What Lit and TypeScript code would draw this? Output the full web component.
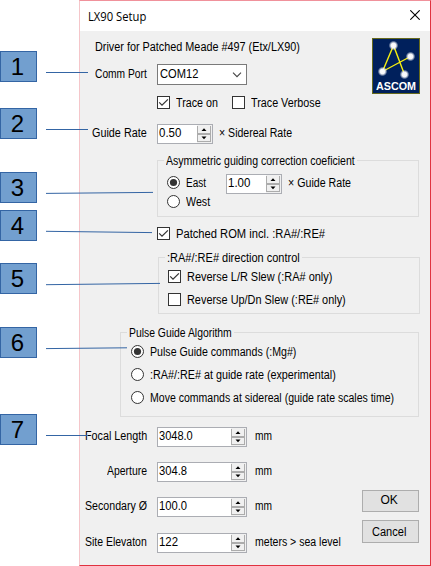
import { LitElement, html, css, svg } from "lit";
import { customElement, property } from "lit/decorators.js";

/** A text run condensed or widened so that it spans a given width. */
@customElement("fit-text")
class FitText extends LitElement {
  @property() text = "";
  @property({ type: Number }) width = 0;
  static styles = css`
    :host { display: block; white-space: pre; flex: none; }
    .run { display: inline-block; transform-origin: 0 50%; vertical-align: top; }
  `;
  render() {
    return html`<span class="run">${this.text}</span>`;
  }
  updated() {
    const run = this.renderRoot.querySelector(".run") as HTMLElement;
    const natural = run.offsetWidth;
    run.style.transform = `scaleX(${this.width / natural})`;
    this.style.width = `${this.width}px`;
  }
}

@customElement("check-box")
class CheckBox extends LitElement {
  @property({ type: Boolean }) checked = false;
  static styles = css`
    :host { display: block; flex: none; width: 13px; height: 13px; }
    svg { display: block; }
  `;
  render() {
    return html`<svg width="13" height="13" viewBox="0 0 13 13">
      <rect x=".5" y=".5" width="12" height="12" fill="#fff" stroke="#333" />
      ${this.checked ? svg`<path d="M2.2 6.4 5 9.2 10.9 3.3" fill="none" stroke="#333" stroke-width="1.2" />` : ""}
    </svg>`;
  }
}

@customElement("radio-dot")
class RadioDot extends LitElement {
  @property({ type: Boolean }) checked = false;
  static styles = css`
    :host { display: block; flex: none; width: 13px; height: 13px; }
    svg { display: block; }
  `;
  render() {
    return html`<svg width="13" height="13" viewBox="0 0 13 13">
      <circle cx="6.5" cy="6.5" r="6" fill="#fff" stroke="#333" />
      ${this.checked ? svg`<circle cx="6.5" cy="6.5" r="3.6" fill="#333" />` : ""}
    </svg>`;
  }
}

@customElement("spin-box")
class SpinBox extends LitElement {
  @property() value = "";
  @property({ type: Number }) span = 0;
  static styles = css`
    :host {
      display: flex; flex: none; box-sizing: border-box; width: 90px; height: 20px;
      border: 1px solid #abadb3; background: #fff; justify-content: space-between;
      align-items: flex-start; padding-left: 1px;
    }
    :host([small]) { width: 56px; }
    svg { display: block; flex: none; }
  `;
  render() {
    return html`<fit-text .text=${this.value} .width=${this.span}></fit-text>
      <svg width="15" height="18" viewBox="0 0 15 18">
        <rect width="15" height="18" fill="#f0f0f0" />
        <rect x=".5" y=".5" width="13" height="8" fill="#f0f0f0" stroke="#acacac" />
        <rect x=".5" y="9.5" width="13" height="7" fill="#f0f0f0" stroke="#acacac" />
        <path d="M0 .5H15" stroke="#f0f0f0" />
        <path d="M4.5 6 7 3.3 9.5 6zM4.5 11.5 7 14.2 9.5 11.5z" fill="#000" />
      </svg>`;
  }
}

const t = (text: string, width: number) =>
  html`<fit-text .text=${text} .width=${width}></fit-text>`;

const optics = [
  { label: "Focal Length", lw: 62, value: "3048.0", vw: 34, unit: "mm", uw: 17 },
  { label: "Aperture", lw: 40, value: "304.8", vw: 28, unit: "mm", uw: 17 },
  { label: "Secondary Ø", lw: 62, value: "100.0", vw: 28, unit: "mm", uw: 17 },
  { label: "Site Elevaton", lw: 62, value: "122", vw: 19, unit: "meters > sea level", uw: 86 },
];

@customElement("app-root")
class AppRoot extends LitElement {
  static styles = css`
    :host {
      display: flex; position: relative; width: 431px; height: 566px; overflow: hidden;
      background: #fff; color: #000; font: 12px/16px "Liberation Sans", Arial, sans-serif;
    }
    .notes { width: 79px; flex: none; }
    .note {
      box-sizing: border-box; width: 37px; height: 31px; border: 1px solid #3465a4;
      background: #729fcf; font: 24px/29px "Liberation Sans", Arial, sans-serif;
      text-align: center; padding-right: 2px;
    }
    .n1 { margin-top: 51px; }
    .n2 { margin-top: 26px; }
    .n3 { margin-top: 33px; }
    .n4 { margin-top: 7px; }
    .n5 { margin-top: 22px; }
    .n6 { margin-top: 33px; }
    .n7 { margin-top: 56px; }
    .leaders { position: absolute; left: 0; top: 0; pointer-events: none; }
    .dialog {
      box-sizing: border-box; width: 352px; height: 566px; background: #f0f0f0;
      border: 1px solid #e0323f; border-left-color: #f5c6ca; border-top-color: #f0919b;
    }
    .titlebar {
      box-sizing: border-box; display: flex; justify-content: space-between; align-items: center;
      height: 30px; background: #fff; padding: 0 10px 0 8px; font: 12px/16px "Open Sans", sans-serif;
    }
    .titlebar fit-text { margin-top: 2px; }
    .titlebar svg { margin-bottom: 2px; }
    .body { height: 534px; }
    .top { display: flex; justify-content: space-between; height: 87px; padding-right: 10px; }
    .logo { margin-top: 7px; flex: none; }
    .logo text { font: bold 11px "Liberation Sans", Arial, sans-serif; }
    .row { display: flex; align-items: center; }
    .label { display: flex; justify-content: flex-end; width: 67px; margin-right: 10px; flex: none; }
    .driver { padding: 0 0 2px 15px; height: 31px; }
    .comm { height: 21px; }
    .combo {
      box-sizing: border-box; display: flex; align-items: center; justify-content: space-between;
      width: 90px; height: 21px; background: #fff; border: 1px solid #7a7a7a; padding: 0 4px 0 2px;
    }
    .combo fit-text, .comm .label { padding-bottom: 2px; }
    .trace { padding: 11px 0 0 77px; height: 13px; gap: 6px; }
    .trace check-box + fit-text { margin-right: 8px; }
    .rate { height: 20px; margin-top: 6px; }
    .rate .label, .field .label, .unit, .times { padding-bottom: 2px; }
    .times { margin-left: 6px; }
    .group { box-sizing: border-box; position: relative; border: 1px solid #dcdcdc; }
    .legend {
      position: absolute; top: -8px; left: 6px; background: #f0f0f0; padding: 0 2px; display: flex;
    }
    .asym { margin: 16px 0 0 77px; width: 262px; height: 57px; padding-left: 9px; }
    .asym radio-dot, .pulse radio-dot { margin-right: 6px; }
    .east { margin-top: 13px; height: 20px; }
    .east > radio-dot, .east > fit-text { padding-bottom: 3px; }
    .east spin-box { margin-left: 20px; }
    .west { height: 13px; margin-top: 1px; }
    .patched { height: 13px; margin: 10px 0 0 77px; gap: 6px; }
    .direction { margin: 17px 0 0 78px; width: 262px; height: 57px; padding: 12px 0 0 9px; }
    .direction .row { height: 13px; margin-bottom: 10px; gap: 6px; }
    .pulse { margin: 18px 0 0 40px; width: 299px; height: 85px; padding: 12px 0 0 10px; }
    .pulse .row { height: 13px; margin-bottom: 10px; }
    .foot { display: flex; justify-content: space-between; padding-right: 11px; margin-top: 10px; }
    .field { height: 20px; margin-bottom: 15px; }
    .field:nth-child(3) { margin-bottom: 16px; }
    .unit { margin-left: 8px; }
    .buttons { display: flex; flex-direction: column; gap: 8px; padding-top: 63px; }
    .button {
      box-sizing: border-box; width: 57px; height: 22px; border: 1px solid #adadad;
      background: #e1e1e1; display: flex; align-items: center; justify-content: center;
    }
    .button fit-text { margin-bottom: 2px; margin-right: 3px; }
    .button.cancel { height: 23px; }
    .button.cancel fit-text { margin: 0; margin-right: 3px; }
  `;

  render() {
    return html`
      <div class="notes">
        ${[1, 2, 3, 4, 5, 6, 7].map((n) => html`<div class="note n${n}">${n}</div>`)}
      </div>
      <div class="dialog">
        <div class="titlebar">
          ${t("LX90 Setup", 58)}
          <svg width="10" height="10" viewBox="0 0 10 10">
            <path d="M.3 .3 9.7 9.7M9.7 .3 .3 9.7" stroke="#000" stroke-width="1.1" />
          </svg>
        </div>
        <div class="body">
          <div class="top">
            <div>
              <div class="row driver">${t("Driver for Patched Meade #497 (Etx/LX90)", 205)}</div>
              <div class="row comm">
                <div class="label">${t("Comm Port", 52)}</div>
                <div class="combo">
                  ${t("COM12", 38)}
                  <svg width="10" height="6" viewBox="0 0 10 6">
                    <path d="M1 .7 5 4.7 9 .7" fill="none" stroke="#444" stroke-width="1.1" />
                  </svg>
                </div>
              </div>
              <div class="row trace">
                <check-box checked></check-box>${t("Trace on", 42)}
                <check-box></check-box>${t("Trace Verbose", 70)}
              </div>
            </div>
            <svg class="logo" width="48" height="56" viewBox="0 0 48 56">
              <defs>
                <radialGradient id="star">
                  <stop offset="0" stop-color="#fff" />
                  <stop offset=".5" stop-color="#f4f5fa" />
                  <stop offset="1" stop-color="#fff" stop-opacity="0" />
                </radialGradient>
              </defs>
              <rect x=".5" y=".5" width="47" height="55" fill="#00205c" stroke="#66691c" />
              <path d="M10.5 33.5 21.5 7.5 32.5 36.5M10.5 33.5 38.5 18.5" fill="none" stroke="#f5ee10" stroke-width="1.4" />
              <circle cx="21.5" cy="7.5" r="4.8" fill="url(#star)" />
              <circle cx="38.5" cy="18.5" r="4.8" fill="url(#star)" />
              <circle cx="10.5" cy="33.5" r="4.8" fill="url(#star)" />
              <circle cx="32.5" cy="36.5" r="4.8" fill="url(#star)" />
              <text x="4" y="52" fill="#fff" textLength="40" lengthAdjust="spacingAndGlyphs">ASCOM</text>
            </svg>
          </div>
          <div class="row rate">
            <div class="label">${t("Guide Rate", 55)}</div>
            <spin-box small value="0.50" .span=${22}></spin-box>
            <div class="times">${t("× Sidereal Rate", 73)}</div>
          </div>
          <div class="group asym">
            <div class="legend">${t("Asymmetric guiding correction coeficient", 189)}</div>
            <div class="row east">
              <radio-dot checked></radio-dot>${t("East", 20)}
              <spin-box small value="1.00" .span=${22}></spin-box>
              <div class="times">${t("× Guide Rate", 63)}</div>
            </div>
            <div class="row west"><radio-dot></radio-dot>${t("West", 24)}</div>
          </div>
          <div class="row patched">
            <check-box checked></check-box>${t("Patched ROM incl. :RA#/:RE#", 149)}
          </div>
          <div class="group direction">
            <div class="legend">${t(":RA#/:RE# direction control", 133)}</div>
            <div class="row"><check-box checked></check-box>${t("Reverse L/R Slew (:RA# only)", 145)}</div>
            <div class="row"><check-box></check-box>${t("Reverse Up/Dn Slew (:RE# only)", 159)}</div>
          </div>
          <div class="group pulse">
            <div class="legend">${t("Pulse Guide Algorithm", 103)}</div>
            <div class="row"><radio-dot checked></radio-dot>${t("Pulse Guide commands (:Mg#)", 146)}</div>
            <div class="row"><radio-dot></radio-dot>${t(":RA#/:RE# at guide rate (experimental)", 186)}</div>
            <div class="row"><radio-dot></radio-dot>${t("Move commands at sidereal (guide rate scales time)", 244)}</div>
          </div>
          <div class="foot">
            <div>
              ${optics.map((f) => html`<div class="row field">
                <div class="label">${t(f.label, f.lw)}</div>
                <spin-box value=${f.value} .span=${f.vw}></spin-box>
                <div class="unit">${t(f.unit, f.uw)}</div>
              </div>`)}
            </div>
            <div class="buttons">
              <div class="button">${t("OK", 17)}</div>
              <div class="button cancel">${t("Cancel", 34)}</div>
            </div>
          </div>
        </div>
      </div>
      <svg class="leaders" width="431" height="566" viewBox="0 0 431 566" fill="none" stroke="#3465a4">
        <path d="M46 72.5H88M46 129.5H88M46 193.4 153 192.4M46 231.3 152 232.6M46 284.7 160 283.4M46 348.6 127 347.8M46 435.5H88" />
      </svg>
    `;
  }
}
